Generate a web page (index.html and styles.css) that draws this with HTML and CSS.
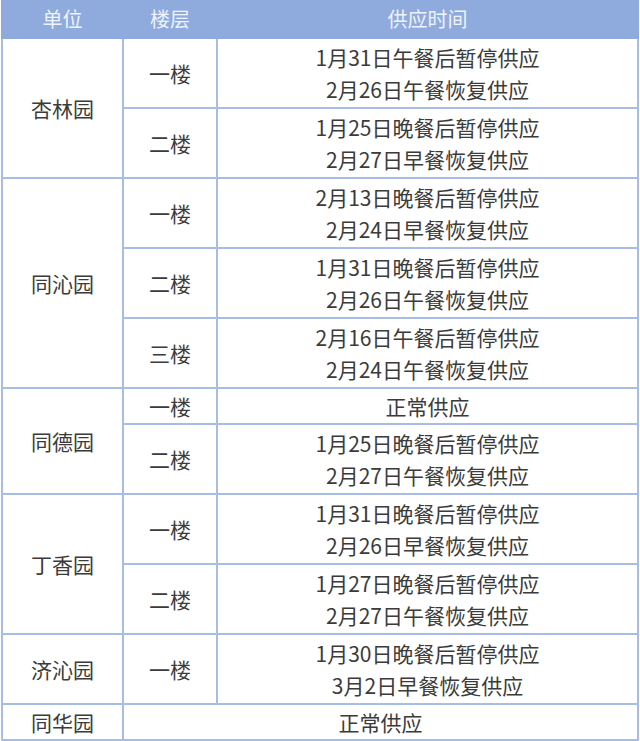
FILE: index.html
```html
<!DOCTYPE html>
<html lang="zh-CN">
<head>
<meta charset="utf-8">
<title>供应时间</title>
<link rel="stylesheet" href="styles.css">
</head>
<body>
<div class="wrap">
<table class="schedule">
  <colgroup>
    <col class="col-unit">
    <col class="col-floor">
    <col class="col-time">
  </colgroup>
  <thead>
    <tr><th>单位</th><th>楼层</th><th>供应时间</th></tr>
  </thead>
  <tbody>
    <tr><td rowspan="2">杏林园</td><td>一楼</td><td>1月31日午餐后暂停供应<br>2月26日午餐恢复供应</td></tr>
    <tr><td>二楼</td><td>1月25日晚餐后暂停供应<br>2月27日早餐恢复供应</td></tr>
    <tr><td rowspan="3">同沁园</td><td>一楼</td><td>2月13日晚餐后暂停供应<br>2月24日早餐恢复供应</td></tr>
    <tr><td>二楼</td><td>1月31日晚餐后暂停供应<br>2月26日午餐恢复供应</td></tr>
    <tr><td>三楼</td><td>2月16日午餐后暂停供应<br>2月24日午餐恢复供应</td></tr>
    <tr class="single"><td rowspan="2">同德园</td><td>一楼</td><td>正常供应</td></tr>
    <tr><td>二楼</td><td>1月25日晚餐后暂停供应<br>2月27日午餐恢复供应</td></tr>
    <tr><td rowspan="2">丁香园</td><td>一楼</td><td>1月31日晚餐后暂停供应<br>2月26日早餐恢复供应</td></tr>
    <tr><td>二楼</td><td>1月27日晚餐后暂停供应<br>2月27日午餐恢复供应</td></tr>
    <tr><td>济沁园</td><td>一楼</td><td>1月30日晚餐后暂停供应<br>3月2日早餐恢复供应</td></tr>
    <tr class="single"><td>同华园</td><td colspan="2">正常供应</td></tr>
  </tbody>
</table>
</div>
</body>
</html>
```
FILE: styles.css
```css
html, body {
  margin: 0;
  padding: 0;
  background: #ffffff;
}

.wrap {
  padding: 0 1px;
}

.schedule {
  width: 638px;
  border-collapse: collapse;
  table-layout: fixed;
  font-family: "Noto Sans CJK SC", "Noto Sans", sans-serif;
  color: #3b3b3b;
}

.col-unit { width: 121px; }
.col-floor { width: 94px; }

.schedule th {
  height: 37px;
  padding: 0;
  background: #8fabdd;
  color: #eef3fc;
  font-size: 20px;
  font-weight: normal;
  line-height: 37px;
  text-align: center;
  border: 2px solid #8fabdd;
  border-top: 0;
}

.schedule td {
  padding: 2px 0;
  font-size: 21px;
  line-height: 32px;
  text-align: center;
  vertical-align: middle;
  border: 2px solid #a8bde6;
}

.schedule tr.single td {
  padding: 1px 0;
}
```
